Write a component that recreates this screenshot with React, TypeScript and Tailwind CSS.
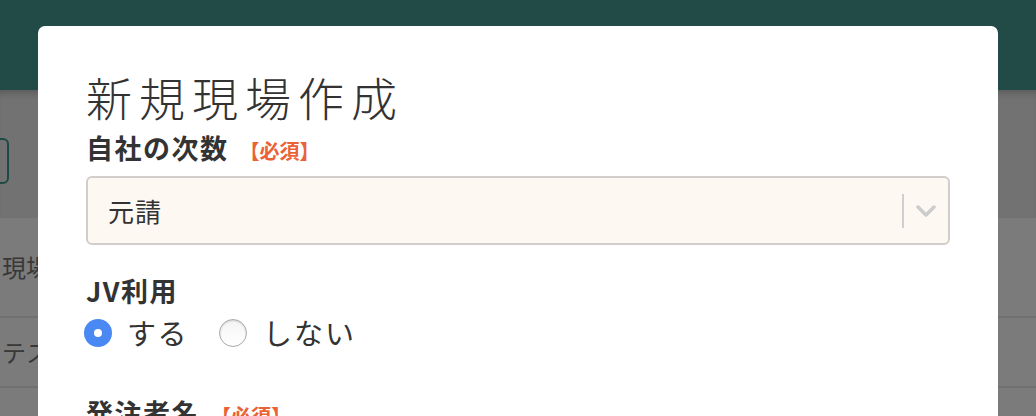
import React from "react";

const jp = { fontFamily: '"Noto Sans CJK JP", "Noto Sans", sans-serif' };

function Label({ text, required }: { text: string; required?: boolean }) {
  return (
    <div className="flex items-baseline h-[34px] leading-[34px]">
      <span className="text-[27px] font-bold text-[#333333] tracking-[1.5px]">{text}</span>
      {required && (
        <span className="ml-[11px] text-[20px] font-bold text-[#ea6235]">【必須】</span>
      )}
    </div>
  );
}

export default function App() {
  return (
    <div className="relative w-[1036px] h-[416px] overflow-hidden bg-[#7b7b7b]" style={jp}>
      {/* background page (dimmed) */}
      <div className="h-[90px] bg-[#224b47]" />
      <div className="relative h-[128px] bg-[#727272] shadow-[inset_0_8px_8px_-6px_rgba(0,0,0,0.25)]">
        <div className="absolute left-[-100px] top-[48px] w-[109px] h-[46px] rounded-md border-2 border-[#1e4a44]" />
      </div>
      <div className="h-[100px] border-b-2 border-[#707070] flex items-center pl-[2px]">
        <span className="text-[24px] text-[#383838]">現場名</span>
      </div>
      <div className="h-[70px] border-b-2 border-[#707070] flex items-center pl-[2px]">
        <span className="text-[24px] text-[#383838]">テスト</span>
      </div>

      {/* modal */}
      <div className="absolute left-[38px] top-[26px] w-[960px] h-[420px] bg-white rounded-t-[7px] px-[48px] pt-[43px]">
        <h1 className="text-[46px] leading-[54px] font-light tracking-[7px] text-[#333333]">新規現場作成</h1>
        <div className="mt-[8px]">
          <Label text="自社の次数" required />
        </div>
        <div className="mt-[11px] h-[69px] rounded-[6px] border-2 border-[#d0cdca] bg-[#fdf8f2] flex items-center">
          <span className="flex-1 pl-[20px] text-[26px] text-[#333333] tracking-[1px]">元請</span>
          <div className="w-[2px] h-[34px] bg-[#cfcfcf]" />
          <div className="w-[44px] flex items-center justify-center">
            <svg width="20" height="14" viewBox="0 0 20 14">
              <polyline points="2,3 10,11 18,3" fill="none" stroke="#cccccc" strokeWidth="3.5" strokeLinecap="round" strokeLinejoin="round" />
            </svg>
          </div>
        </div>
        <div className="mt-[29px]">
          <Label text="JV利用" />
        </div>
        <div className="mt-[5px] h-[40px] flex items-center -ml-[2px]">
          <span className="w-[28px] h-[28px] rounded-full bg-[#4a89f3] flex items-center justify-center">
            <span className="w-[8px] h-[8px] rounded-full bg-white" />
          </span>
          <span className="ml-[15px] text-[29px] text-[#333333] tracking-[1.5px]">する</span>
          <span className="ml-[31px] w-[28px] h-[28px] rounded-full border border-[#a9a9a9] bg-gradient-to-b from-[#f4f4f4] to-white shadow-[inset_0_1px_2px_rgba(0,0,0,0.15)]" />
          <span className="ml-[16px] text-[29px] text-[#333333] tracking-[2px]">しない</span>
        </div>
        <div className="mt-[43px]">
          <Label text="発注者名" required />
        </div>
      </div>
    </div>
  );
}
